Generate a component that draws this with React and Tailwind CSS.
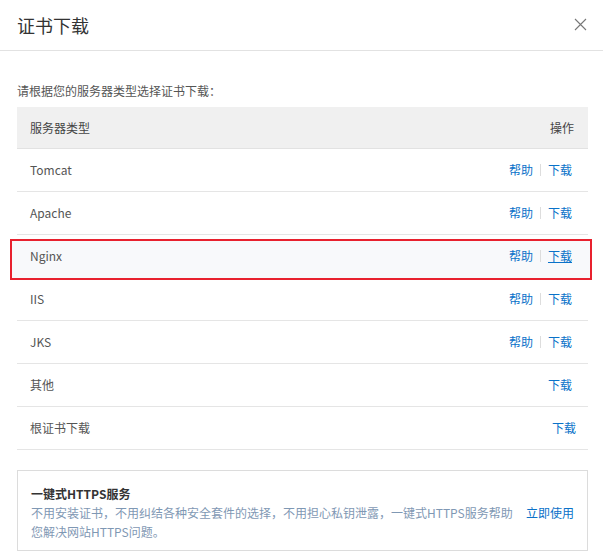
const font = { fontFamily: '"Noto Sans CJK SC", "Liberation Sans", sans-serif' };

const rows = [
  { name: 'Tomcat', help: true },
  { name: 'Apache', help: true },
  { name: 'Nginx', help: true, marked: true },
  { name: 'IIS', help: true },
  { name: 'JKS', help: true },
  { name: '其他', help: false },
  { name: '根证书下载', help: false, wide: true },
];

export default function App() {
  return (
    <div className="w-[603px] h-[557px] bg-white text-[12px] text-[#333] overflow-hidden" style={font}>
      <div className="h-[51px] flex items-center justify-between pl-[17px] pr-[16px] border-b border-[#e2e2e2]">
        <span className="text-[18px] text-[#333]">证书下载</span>
        <svg width="13" height="13" viewBox="0 0 13 13" stroke="#777" strokeWidth="1.1" className="mt-[-2px]">
          <path d="M1 1L12 12M12 1L1 12" />
        </svg>
      </div>
      <div className="px-[17px] pr-[15px]">
        <div className="mt-[30px] h-[20px] leading-[20px] text-[#555]">请根据您的服务器类型选择证书下载：</div>
        <div className="mt-[6px]">
          <div className="h-[42px] bg-[#f0f0f0] flex items-center justify-between px-[13px] border-b border-[#e2e2e2] text-[#444]">
            <span>服务器类型</span>
            <span className="mr-[1px]">操作</span>
          </div>
          {rows.map((r) => (
            <div key={r.name} className="relative h-[43px] flex items-center justify-between pl-[13px] border-b border-[#e5e5e5]">
              {r.marked && <div className="absolute left-[-7px] right-[-4px] top-[4px] bottom-[-3px] border-2 border-[#e8212e] bg-[#f8f9fb] z-0" />}
              <span className="relative text-[#555]">{r.name}</span>
              <span className={`relative flex items-center text-[#0a72c9] ${r.wide ? 'pr-[12px]' : 'pr-[16px]'}`}>
                {r.help && (
                  <>
                    <span>帮助</span>
                    <span className="w-px h-[12px] bg-[#ddd] mx-[7px]" />
                  </>
                )}
                <span className={r.marked ? 'underline' : ''}>下载</span>
              </span>
            </div>
          ))}
        </div>
        <div className="mt-[20px] border border-[#dcdcdc] px-[13px] pt-[13px] pb-[8px] h-[81px]">
          <div className="font-bold text-[#333] leading-[19px]">一键式HTTPS服务</div>
          <div className="flex justify-between leading-[19px] text-[#7f98b4]">
            <span className="w-[490px]">不用安装证书，不用纠结各种安全套件的选择，不用担心私钥泄露，一键式HTTPS服务帮助您解决网站HTTPS问题。</span>
            <span className="text-[#0a72c9] shrink-0">立即使用</span>
          </div>
        </div>
      </div>
    </div>
  );
}
